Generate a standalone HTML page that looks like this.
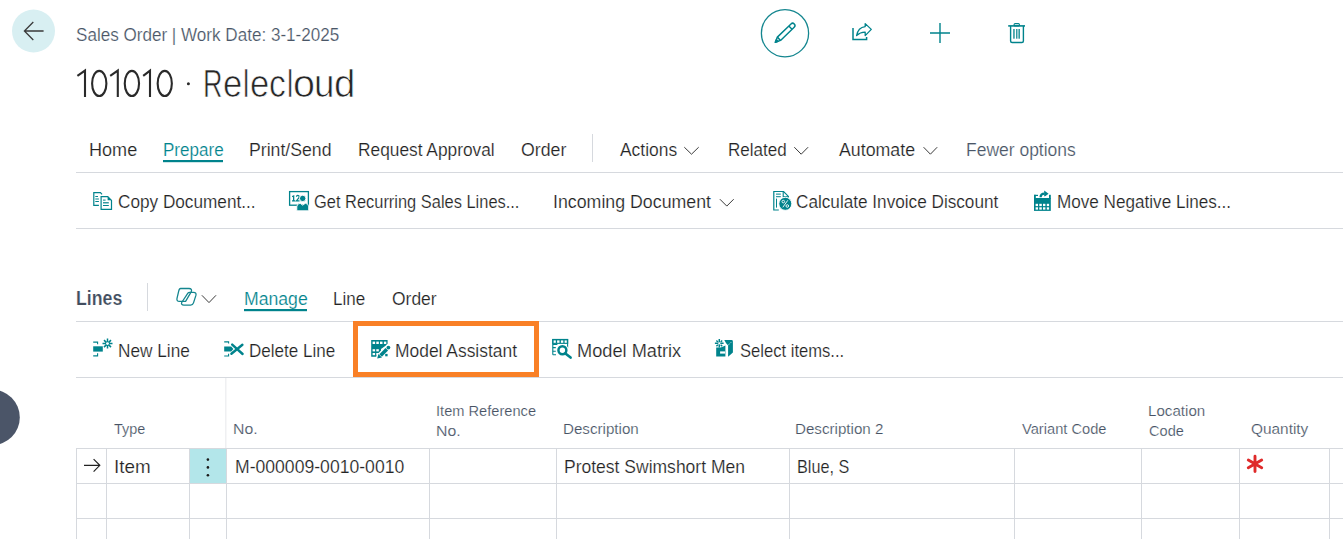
<!DOCTYPE html>
<html><head><meta charset="utf-8"><style>
html,body{margin:0;padding:0;background:#fff;width:1343px;height:539px;overflow:hidden;position:relative}
.t{-webkit-text-stroke:0.2px #fff;position:absolute;white-space:nowrap;line-height:1;font-family:"Liberation Sans",sans-serif;transform-origin:0 0}
svg{position:absolute;left:0;top:0}
</style></head><body>
<svg width="1343" height="539" viewBox="0 0 1343 539">
<g fill="#d6d9de">
<rect x="76" y="172" width="1267" height="1"/>
<rect x="76" y="228" width="1267" height="1"/>
<rect x="76" y="321" width="1267" height="1"/>
<rect x="76" y="377" width="1267" height="1"/>
<rect x="76" y="448" width="1267" height="1"/>
<rect x="76" y="483" width="1267" height="1"/>
<rect x="76" y="518" width="1267" height="1"/>
<rect x="76" y="448" width="1" height="91"/>
<rect x="106" y="448" width="1" height="91"/>
<rect x="189" y="448" width="1" height="91"/>
<rect x="226" y="448" width="1" height="91"/>
<rect x="429" y="448" width="1" height="91"/>
<rect x="556" y="448" width="1" height="91"/>
<rect x="789" y="448" width="1" height="91"/>
<rect x="1014" y="448" width="1" height="91"/>
<rect x="1141" y="448" width="1" height="91"/>
<rect x="1239" y="448" width="1" height="91"/>
<rect x="1329" y="448" width="1" height="91"/>
<rect x="592" y="134" width="1" height="28"/>
<rect x="147" y="283" width="1" height="28"/>
</g>
<rect x="225" y="378" width="1.5" height="70" fill="#eff0f2"/>
<rect x="190" y="449" width="36" height="34" fill="#b3e6ea"/>
<rect x="163" y="160" width="60" height="2.2" fill="#00838c"/>
<rect x="244" y="309" width="63" height="2.2" fill="#00838c"/>
<rect x="355.5" y="323.5" width="181" height="51" fill="none" stroke="#f98026" stroke-width="5"/>
<circle cx="33.5" cy="31" r="21.5" fill="#d8eff2"/>
<circle cx="-8" cy="417.4" r="27.8" fill="#4b5568"/>
<circle cx="785" cy="33.2" r="23.6" fill="none" stroke="#14868f" stroke-width="1.3"/>
<!-- back arrow -->
<path d="M24.2 31 H43.6 M33.3 22 L24.4 31 L33.3 40" fill="none" stroke="#3a3a3a" stroke-width="1.3"/>
<!-- pencil -->
<g transform="translate(775,42.6) rotate(-44.1)" fill="none" stroke="#00838c" stroke-width="1.45" stroke-linejoin="round">
<path d="M0.5 0 L5.5 -2.3 H24.5 A2.3 2.3 0 0 1 24.5 2.3 H5.5 Z"/>
<path d="M5.5 -2.3 V2.3 M21.5 -2.3 V2.3"/>
<path d="M0.5 0 L3 -1.2 V1.2 Z" fill="#00838c"/>
</g>
<!-- share -->
<g fill="none" stroke="#00838c" stroke-width="1.5">
<path d="M853 28 V39.6 H866.6 V37"/>
<path d="M856.6 35.6 Q858 27.5 865.2 26.6 V23.6 L871.3 29.4 L865.2 35.6 V32.2 Q860.5 32 856.6 35.6 Z" stroke-width="1.3" stroke-linejoin="round"/>
</g>
<!-- plus -->
<path d="M930 33 H950 M940 23 V43" stroke="#00838c" stroke-width="1.4"/>
<!-- trash -->
<g fill="none" stroke="#00838c">
<path d="M1008.2 25.9 H1025" stroke-width="1.6"/>
<rect x="1014.1" y="23.6" width="5.3" height="2.3" rx="1" stroke-width="1.1"/>
<path d="M1010.6 26 V41 Q1010.6 42.5 1012.1 42.5 H1021.9 Q1023.4 42.5 1023.4 41 V26" stroke-width="1.4"/>
</g>
<g fill="#00838c">
<rect x="1013.3" y="29" width="1.3" height="9.7"/>
<rect x="1016.2" y="29" width="1.2" height="9.7"/>
<rect x="1018.5" y="29" width="1.3" height="9.7"/>
</g>

<!-- chevrons -->
<g fill="none" stroke="#3a3a3a" stroke-width="1">
<path d="M684.3 147.2 L691.5 154.2 L698.7 147.2"/>
<path d="M794.3 147.2 L801.2 154.2 L808.1 147.2"/>
<path d="M923.6 147.2 L930.4 154.2 L937.2 147.2"/>
<path d="M719.9 199.2 L726.8 206.1 L733.7 199.2"/>
<path d="M201.9 295.3 L209 302.6 L216 295.3"/>
</g>
<!-- copilot -->
<g fill="none" stroke="#14868f" stroke-width="1.3" stroke-linejoin="round">
<path d="M180.6 288.5 H189 Q192.4 288.5 191.3 291.6 L185.6 301.3 H179.4 Q176.4 301.3 177 298.3 L178.7 291.2 Q179.3 288.5 180.6 288.5 Z"/>
<path d="M189.6 292.3 H193.5 Q196.7 292.3 195.9 295.4 L193.5 302.9 Q192.8 305.1 190.6 305.1 H183.9 Q180.8 305.1 181.7 302.5 L187.9 293.2 Q188.5 292.3 189.6 292.3 Z"/>
</g>
<!-- row arrow -->
<path d="M84 465.3 H99.8 M93.6 459.1 L99.8 465.3 L93.6 471.6" fill="none" stroke="#222" stroke-width="1.2"/>
<g fill="#1a1a1a"><circle cx="207.9" cy="459.6" r="1.3"/><circle cx="207.9" cy="467.4" r="1.3"/><circle cx="207.9" cy="475.2" r="1.3"/></g>
<!-- asterisk -->
<path d="M1255 456.2 V471.6 M1248.3 460.1 L1261.7 467.8 M1248.3 467.8 L1261.7 460.1" stroke="#df2a2a" stroke-width="2.9" stroke-linecap="round"/>
<!-- copy document -->
<g fill="none" stroke="#00838c" stroke-width="1.2">
<path d="M98.9 205.4 H93.8 V192.7 H100.5 L102 194.3"/>
<path d="M101.1 196.7 H107.8 L111.5 200.4 V209.3 H101.1 Z"/>
</g>
<g fill="#00838c">
<rect x="95.3" y="196" width="2.7" height="1"/>
<rect x="95.3" y="198.5" width="3.6" height="1"/>
<rect x="95.3" y="201" width="3.6" height="1"/>
<rect x="103" y="199.6" width="2.6" height="1"/>
<rect x="103" y="202.2" width="5.8" height="1.2"/>
<rect x="103" y="205" width="5.8" height="1"/>
<path d="M107.6 196.4 V200.3 H111.8 Z"/>
</g>
<!-- recurring -->
<rect x="289.6" y="191.6" width="18.8" height="13.6" fill="none" stroke="#00838c" stroke-width="1.3"/>
<g fill="#00838c">
<path d="M292 196 L294.3 195 V200.3 H295.3 V201.5 H292 V200.3 H293 V196.8 L292 197.2 Z"/>
<path d="M296.3 196.6 Q297.4 194.9 298.8 195.7 Q299.6 196.8 298.6 198.2 L296.4 200.9 H299.6" fill="none" stroke="#00838c" stroke-width="1.2"/>
<circle cx="302.7" cy="198.4" r="3.2" stroke="#fff" stroke-width="0.9"/>
<path d="M296.8 210.8 V206.8 Q296.8 203.5 300.2 203.3 L302.7 205.2 L305.3 203.3 Q308.7 203.5 308.7 206.8 V210.8 Z" stroke="#fff" stroke-width="0.9"/>
</g>
<!-- calc discount -->
<g fill="none" stroke="#00838c" stroke-width="1.2">
<path d="M778.8 210 H773.8 V191.5 H783.6 L788.4 196.4 V197.6"/>
</g>
<g fill="#00838c">
<rect x="776" y="193.6" width="4.8" height="1"/>
<rect x="776" y="196.2" width="4.8" height="1"/>
<rect x="776" y="198.6" width="1" height="9"/>
<path d="M783.2 191.6 V196.8 H788.4" fill="none" stroke="#00838c" stroke-width="1.1"/>
<circle cx="785.3" cy="203.8" r="6.5" stroke="#fff" stroke-width="0.9"/>
</g>
<g fill="none" stroke="#fff" stroke-width="0.9">
<circle cx="783.3" cy="201.6" r="1.3"/>
<circle cx="787.3" cy="206" r="1.3"/>
<path d="M787.8 200.3 L782.8 207.3"/>
</g>
<!-- move negative -->
<g fill="#00838c">
<rect x="1034" y="198" width="16.8" height="12.9"/>
<rect x="1034" y="194.8" width="1.9" height="4"/>
<rect x="1034" y="194.8" width="4" height="1.2"/>
<rect x="1049" y="194.8" width="1.8" height="4"/>
<path d="M1044.2 190.5 L1048.6 193.7 L1044.2 196.9 Z"/>
</g>
<g fill="#fff">
<rect x="1035.9" y="196.4" width="13.1" height="1.6"/>
<rect x="1035.6" y="203.8" width="2.4" height="2.3"/>
<rect x="1039.3" y="203.8" width="2.5" height="2.3"/>
<rect x="1043" y="203.8" width="2.4" height="2.3"/>
<rect x="1046.8" y="203.8" width="2.3" height="2.3"/>
<rect x="1035.6" y="207.3" width="2.4" height="2.3"/>
<rect x="1039.3" y="207.3" width="2.5" height="2.3"/>
<rect x="1043" y="207.3" width="2.4" height="2.3"/>
<rect x="1046.8" y="207.3" width="2.3" height="2.3"/>
</g>
<path d="M1040.6 197.2 Q1040.6 193.6 1044.6 193.6" fill="none" stroke="#00838c" stroke-width="2.3"/>
<!-- new line -->
<g fill="none" stroke="#00838c" stroke-width="1.1">
<path d="M93.2 342.1 H97.6 V344.2"/>
<path d="M97.6 353.2 V355.9 H93.2"/>
<path d="M107.5 338.6 V348.6 M102.5 343.6 H112.5 M104 340.1 L111 347.1 M104 347.1 L111 340.1" stroke-width="1.5"/>
</g>
<rect x="93.2" y="346.3" width="9.6" height="5.3" fill="#00838c"/>
<circle cx="107.5" cy="343.6" r="1.4" fill="#fff"/>
<!-- delete line -->
<g fill="none" stroke="#00838c" stroke-width="1.1">
<path d="M224.2 341.9 H228.6 V343.6"/>
<path d="M228.6 353.8 V356 H224.2"/>
</g>
<path d="M224.2 346.5 H231.2 L233.4 349 L231.2 351.4 H224.2 Z" fill="#00838c"/>
<path d="M232.2 344.6 L242.6 354 M242.4 344.8 L231.4 353.8" stroke="#00838c" stroke-width="2.4" stroke-linecap="round"/>
<!-- model assistant -->
<path d="M371.2 340 H387.6 V344.5 L381 349 V356.7 H371.2 Z" fill="#00838c"/>
<g fill="#fff">
<rect x="372.6" y="341.6" width="2.5" height="2.4"/>
<rect x="376.3" y="341.6" width="2.5" height="2.4"/>
<rect x="380" y="341.6" width="2.5" height="2.4"/>
<rect x="383.9" y="341.6" width="2.4" height="2.4"/>
<rect x="372.6" y="349.2" width="2.5" height="2.2"/>
<rect x="376.3" y="349.2" width="2.5" height="2.2"/>
<rect x="372.6" y="353" width="2.5" height="2.2"/>
<rect x="376.3" y="353" width="2.5" height="2.2"/>
</g>
<path d="M379.6 356.4 L389.4 346.6" stroke="#fff" stroke-width="6.4" stroke-linecap="round"/>
<path d="M380.6 355.4 L386.8 349.2" stroke="#00838c" stroke-width="3.6"/>
<circle cx="388.4" cy="347.6" r="1.9" fill="#00838c"/>
<path d="M377.2 358.6 L378.4 354 L382 357.4 Z" fill="#00838c"/>
<rect x="385.2" y="353.9" width="2.4" height="2.4" fill="#00838c"/>
<!-- model matrix -->
<g fill="none" stroke="#00838c" stroke-width="1.1">
<path d="M552.8 354.8 V339.5 H567.6 V348"/>
<path d="M552.8 344.4 H557.4 M552.8 347.6 H555.8 M552.8 351.2 H555.8 M552.8 354.8 H556"/>
</g>
<rect x="552.2" y="338.9" width="16" height="5" fill="#00838c"/>
<g fill="#fff">
<rect x="553.6" y="340.4" width="2.2" height="2.4"/>
<rect x="557.1" y="340.4" width="2.4" height="2.4"/>
<rect x="560.9" y="340.4" width="2.4" height="2.4"/>
<rect x="564.6" y="340.4" width="2.2" height="2.4"/>
</g>
<circle cx="562.4" cy="350.2" r="6.2" fill="#fff"/>
<circle cx="562.4" cy="350.2" r="3.95" fill="none" stroke="#00838c" stroke-width="2.5"/>
<path d="M565.4 353.4 L570.6 357.6" stroke="#00838c" stroke-width="2.6" stroke-linecap="round"/>
<!-- select items -->
<g fill="none" stroke="#00838c" stroke-width="1.2">
<path d="M719.3 338.9 V347.6 M714.9 343.3 H723.6" stroke-width="1.5"/>
<path d="M716.4 340.4 L717.9 341.9 M720.7 341.9 L722.2 340.4 M716.4 346.2 L717.9 344.7 M722.2 346.2 L720.7 344.7" stroke-width="1.4"/>
</g>
<circle cx="719.3" cy="343.3" r="1.1" fill="#fff"/>
<path d="M716.2 347.6 L720.7 347.6 L723.2 346.4 L725.4 345.6 V356.6 H716.2 Z" fill="#00838c"/>
<rect x="720.1" y="351.4" width="5" height="2.2" fill="#fff"/>
<path d="M724.3 340 H731.5 Q732.9 340 732.9 341.4 V352.4 L728.1 356.8 V345.4 Q725.8 343.4 724.3 340 Z" fill="#00838c"/>
<path d="M727.9 345 Q730 344 731.6 341.6" fill="none" stroke="#fff" stroke-width="0.7" stroke-dasharray="1 0.8"/>

<!-- title digits -->
<g fill="none" stroke="#2a2a2a" stroke-width="2.1">
<path d="M77.4 75.8 L85 70.6 V97.1"/>
<ellipse cx="99.25" cy="83.45" rx="7.15" ry="12.6"/>
<path d="M110.2 75.8 L117.8 70.6 V97.1"/>
<ellipse cx="131.9" cy="83.45" rx="7.15" ry="12.6"/>
<path d="M143.2 75.8 L150 70.6 V97.1"/>
<ellipse cx="164.75" cy="83.45" rx="7.1" ry="12.6"/>
</g>
<circle cx="188.4" cy="83.8" r="1.5" fill="#2a2a2a"/>
</svg>

<div class="t" style="left:76.12px;top:26.00px;font-size:18.90px;color:#4a5667;font-weight:400;transform:scaleX(0.9040);">Sales Order | Work Date: 3-1-2025</div>
<div class="t" style="left:203.49px;top:64.79px;font-size:38.52px;color:#262626;font-weight:400;transform:scaleX(0.7010);-webkit-text-stroke:0.7px #fff;">R</div>
<div class="t" style="left:223.27px;top:64.79px;font-size:38.52px;color:#262626;font-weight:400;transform:scaleX(0.8978);-webkit-text-stroke:0.7px #fff;">e</div>
<div class="t" style="left:243.07px;top:64.79px;font-size:38.52px;color:#262626;font-weight:400;transform:scaleX(0.7269);-webkit-text-stroke:0.7px #fff;">l</div>
<div class="t" style="left:250.37px;top:64.79px;font-size:38.52px;color:#262626;font-weight:400;transform:scaleX(0.8978);-webkit-text-stroke:0.7px #fff;">e</div>
<div class="t" style="left:268.80px;top:64.79px;font-size:38.52px;color:#262626;font-weight:400;transform:scaleX(0.8733);-webkit-text-stroke:0.7px #fff;">c</div>
<div class="t" style="left:286.77px;top:64.79px;font-size:38.52px;color:#262626;font-weight:400;transform:scaleX(0.7269);-webkit-text-stroke:0.7px #fff;">l</div>
<div class="t" style="left:292.87px;top:64.79px;font-size:38.52px;color:#262626;font-weight:400;transform:scaleX(1.0277);-webkit-text-stroke:0.7px #fff;">o</div>
<div class="t" style="left:314.45px;top:64.79px;font-size:38.52px;color:#262626;font-weight:400;transform:scaleX(0.9539);-webkit-text-stroke:0.7px #fff;">u</div>
<div class="t" style="left:334.12px;top:64.79px;font-size:38.52px;color:#262626;font-weight:400;transform:scaleX(0.9933);-webkit-text-stroke:0.7px #fff;">d</div>
<div class="t" style="left:88.85px;top:141.00px;font-size:18.90px;color:#232323;font-weight:400;transform:scaleX(0.9563);">Home</div>
<div class="t" style="left:162.94px;top:141.00px;font-size:18.90px;color:#00838c;font-weight:400;transform:scaleX(0.9027);">Prepare</div>
<div class="t" style="left:249.19px;top:141.00px;font-size:18.90px;color:#232323;font-weight:400;transform:scaleX(0.9351);">Print/Send</div>
<div class="t" style="left:357.61px;top:141.00px;font-size:18.90px;color:#232323;font-weight:400;transform:scaleX(0.9165);">Request Approval</div>
<div class="t" style="left:521.29px;top:141.00px;font-size:18.90px;color:#232323;font-weight:400;transform:scaleX(0.9387);">Order</div>
<div class="t" style="left:620.00px;top:141.00px;font-size:18.90px;color:#232323;font-weight:400;transform:scaleX(0.9219);">Actions</div>
<div class="t" style="left:727.64px;top:141.00px;font-size:18.90px;color:#232323;font-weight:400;transform:scaleX(0.9016);">Related</div>
<div class="t" style="left:839.00px;top:141.00px;font-size:18.90px;color:#232323;font-weight:400;transform:scaleX(0.9402);">Automate</div>
<div class="t" style="left:966.00px;top:141.00px;font-size:18.90px;color:#4a5667;font-weight:400;transform:scaleX(0.9254);">Fewer options</div>
<div class="t" style="left:118.14px;top:193.00px;font-size:18.90px;color:#232323;font-weight:400;transform:scaleX(0.9097);">Copy Document...</div>
<div class="t" style="left:313.98px;top:193.00px;font-size:18.90px;color:#232323;font-weight:400;transform:scaleX(0.8695);">Get Recurring Sales Lines...</div>
<div class="t" style="left:552.90px;top:193.00px;font-size:18.90px;color:#232323;font-weight:400;transform:scaleX(0.9406);">Incoming Document</div>
<div class="t" style="left:795.64px;top:193.00px;font-size:18.90px;color:#232323;font-weight:400;transform:scaleX(0.9087);">Calculate Invoice Discount</div>
<div class="t" style="left:1057.33px;top:193.00px;font-size:18.90px;color:#232323;font-weight:400;transform:scaleX(0.9062);">Move Negative Lines...</div>
<div class="t" style="left:76.14px;top:288.08px;font-size:20.93px;color:#414d5e;font-weight:700;transform:scaleX(0.8470);">Lines</div>
<div class="t" style="left:243.59px;top:290.00px;font-size:18.90px;color:#00838c;font-weight:400;transform:scaleX(0.9336);">Manage</div>
<div class="t" style="left:333.44px;top:290.00px;font-size:18.90px;color:#232323;font-weight:400;transform:scaleX(0.9007);">Line</div>
<div class="t" style="left:392.30px;top:290.00px;font-size:18.90px;color:#232323;font-weight:400;transform:scaleX(0.9239);">Order</div>
<div class="t" style="left:118.22px;top:341.95px;font-size:18.60px;color:#232323;font-weight:400;transform:scaleX(0.9270);">New Line</div>
<div class="t" style="left:249.24px;top:341.95px;font-size:18.60px;color:#232323;font-weight:400;transform:scaleX(0.9156);">Delete Line</div>
<div class="t" style="left:394.61px;top:341.95px;font-size:18.60px;color:#232323;font-weight:400;transform:scaleX(0.9370);">Model Assistant</div>
<div class="t" style="left:576.54px;top:341.95px;font-size:18.60px;color:#232323;font-weight:400;transform:scaleX(0.9789);">Model Matrix</div>
<div class="t" style="left:740.24px;top:341.95px;font-size:18.60px;color:#232323;font-weight:400;transform:scaleX(0.8920);">Select items...</div>
<div class="t" style="left:113.61px;top:420.96px;font-size:15.41px;color:#465264;font-weight:400;transform:scaleX(0.9374);">Type</div>
<div class="t" style="left:233.03px;top:420.96px;font-size:15.41px;color:#465264;font-weight:400;transform:scaleX(1.0285);">No.</div>
<div class="t" style="left:435.68px;top:402.56px;font-size:15.41px;color:#465264;font-weight:400;transform:scaleX(0.9498);">Item Reference</div>
<div class="t" style="left:435.73px;top:422.76px;font-size:15.41px;color:#465264;font-weight:400;transform:scaleX(1.0285);">No.</div>
<div class="t" style="left:563.09px;top:420.96px;font-size:15.41px;color:#465264;font-weight:400;transform:scaleX(0.9831);">Description</div>
<div class="t" style="left:795.49px;top:420.96px;font-size:15.41px;color:#465264;font-weight:400;transform:scaleX(0.9833);">Description 2</div>
<div class="t" style="left:1021.60px;top:420.96px;font-size:15.41px;color:#465264;font-weight:400;transform:scaleX(0.9521);">Variant Code</div>
<div class="t" style="left:1148.09px;top:402.56px;font-size:15.41px;color:#465264;font-weight:400;transform:scaleX(0.9830);">Location</div>
<div class="t" style="left:1148.57px;top:422.76px;font-size:15.41px;color:#465264;font-weight:400;transform:scaleX(0.9463);">Code</div>
<div class="t" style="left:1250.88px;top:420.96px;font-size:15.41px;color:#465264;font-weight:400;transform:scaleX(0.9989);">Quantity</div>
<div class="t" style="left:113.90px;top:457.85px;font-size:18.60px;color:#232323;font-weight:400;transform:scaleX(1.0139);">Item</div>
<div class="t" style="left:234.59px;top:457.85px;font-size:18.60px;color:#232323;font-weight:400;transform:scaleX(0.9463);">M-000009-0010-0010</div>
<div class="t" style="left:564.40px;top:457.85px;font-size:18.60px;color:#232323;font-weight:400;transform:scaleX(0.9416);">Protest Swimshort Men</div>
<div class="t" style="left:796.70px;top:457.85px;font-size:18.60px;color:#232323;font-weight:400;transform:scaleX(0.8719);">Blue, S</div>
</body></html>
